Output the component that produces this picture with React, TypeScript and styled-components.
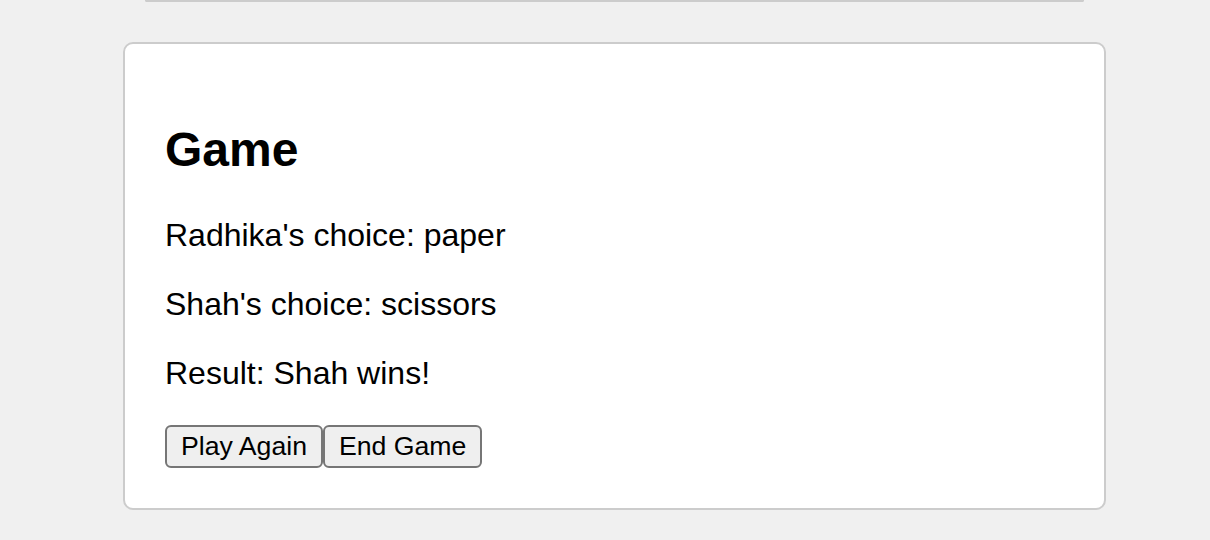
import styled, { createGlobalStyle } from 'styled-components'

const GlobalStyle = createGlobalStyle`
body {
    margin: 0;
    background-color: #f0f0f0;
    font-family: "Liberation Sans", Arial, Helvetica, sans-serif;
    overflow: hidden;
}
`;

const Page = styled.div`
width: 1229px;
display: flex;
flex-direction: column;
align-items: center;
`;

const PrevCardEdge = styled.div`
box-sizing: border-box;
width: 939px;
height: 2px;
border: 2px solid #ccc;
border-top: none;
border-radius: 0 0 10px 10px;
background-color: #fff;
`;

const Card = styled.section`
box-sizing: border-box;
width: 983px;
margin-top: 40px;
padding: 40px;
background-color: #fff;
border: 2px solid #ccc;
border-radius: 10px;
`;

const Title = styled.h2`
font-size: 48px;
font-weight: bold;
margin: 38px 0 40px;
`;

const Line = styled.p`
font-size: 32px;
margin: 32px 0;
`;

const Actions = styled.div`
display: flex;
margin-top: 33px;
`;

const Button = styled.button`
font-family: "Liberation Sans", Arial, sans-serif;
font-size: 26.67px;
padding: 4px 14px;
color: #000;
background-color: #efefef;
border: 2px solid #767676;
border-radius: 6px;
cursor: pointer;
`;

const App = () => {
    const game = {
        player1: 'Radhika',
        player2: 'Shah',
        choice1: 'paper',
        choice2: 'scissors',
        result: 'Shah wins!',
    };

    return (
        <>
            <GlobalStyle />
            <Page>
                <PrevCardEdge />
                <Card>
                    <Title>Game</Title>
                    <Line>{game.player1}'s choice: {game.choice1}</Line>
                    <Line>{game.player2}'s choice: {game.choice2}</Line>
                    <Line style={{ marginBottom: 0 }}>Result: {game.result}</Line>
                    <Actions>
                        <Button>Play Again</Button>
                        <Button>End Game</Button>
                    </Actions>
                </Card>
            </Page>
        </>
    )
}

export default App;
